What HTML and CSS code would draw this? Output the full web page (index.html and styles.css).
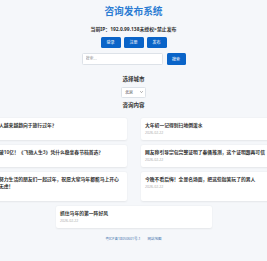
FILE: index.html
```html
<!DOCTYPE html>
<html lang="zh-CN">
<head>
  <meta charset="UTF-8">
  <meta name="viewport" content="width=device-width, initial-scale=1.0">
  <title>咨询发布系统</title>
  <link rel="stylesheet" href="styles.css">
</head>
<body>
  <div class="page">
    <h1 class="site-title">咨询发布系统</h1>
    <p class="ip-status">当前IP：192.0.99.138未授权&gt;禁止发布</p>

    <div class="actions">
      <button class="btn">登录</button>
      <button class="btn">注册</button>
      <button class="btn">发布</button>
    </div>

    <form class="search" onsubmit="return false;">
      <input type="text" class="search-input" placeholder="搜索...">
      <button class="btn search-btn">搜索</button>
    </form>

    <h2 class="section-title">选择城市</h2>
    <div class="city-select">
      <select>
        <option>北京</option>
        <option>上海</option>
        <option>广州</option>
        <option>深圳</option>
      </select>
      <svg class="select-arrow" viewBox="0 0 10 6" fill="none" stroke="currentColor">
        <path stroke-width="1.6" stroke-linecap="round" stroke-linejoin="round" d="M1 1l4 4 4-4" />
      </svg>
    </div>

    <h2 class="section-title">咨询内容</h2>
    <div class="post-list">
      <div class="post-card">
        <h3 class="post-title">为什么年轻人越来越趋向于旅行过年？</h3>
        <div class="post-date">2026-02-22</div>
      </div>
      <div class="post-card">
        <h3 class="post-title">大年初一记得别扫地倒泼水</h3>
        <div class="post-date">2026-02-22</div>
      </div>
      <div class="post-card">
        <h3 class="post-title">春节档票房破10亿！《飞驰人生3》凭什么稳坐春节档首选？</h3>
        <div class="post-date">2026-02-22</div>
      </div>
      <div class="post-card">
        <h3 class="post-title">网友称引导宗包完整证明了秦俑推测，这个证明跟再可信</h3>
        <div class="post-date">2026-02-22</div>
      </div>
      <div class="post-card">
        <h3 class="post-title">致所有正在努力生活的朋友们一起过年，祝愿大家马年都能马上开心快乐，无忧无虑！</h3>
        <div class="post-date">2026-02-22</div>
      </div>
      <div class="post-card">
        <h3 class="post-title">今晚不看后悔！全是名场面，把这些搞笑玩了的男人</h3>
        <div class="post-date">2026-02-22</div>
      </div>
      <div class="post-card">
        <h3 class="post-title">抓住马年的第一阵好风</h3>
        <div class="post-date">2026-02-22</div>
      </div>
    </div>

    <footer class="footer">
      <a href="#">粤ICP备18050601号-1</a>
      <a href="#">网站地图</a>
    </footer>
  </div>
</body>
</html>
```

FILE: styles.css
```css
* {
  margin: 0;
  padding: 0;
  box-sizing: border-box;
}

html,
body {
  overflow-x: hidden;
}

body {
  font-family: "Noto Sans", "Noto Sans CJK SC", sans-serif;
  background-color: #f5f7fa;
  color: #333;
}

.page {
  display: flex;
  flex-direction: column;
  align-items: center;
  padding-top: 6px;
}

.site-title {
  font-size: 9.7px;
  line-height: 12px;
  font-weight: 700;
  color: #2b7cd3;
}

.ip-status {
  margin-top: 7.5px;
  font-size: 4.9px;
  line-height: 7px;
  font-weight: 700;
}

.actions {
  display: flex;
  gap: 3px;
  margin-top: 4.5px;
}

.btn {
  background: #0a64c8;
  color: white;
  border: none;
  border-radius: 1.5px;
  font-family: inherit;
  font-size: 4px;
  line-height: 5px;
  padding: 3px 6px;
  cursor: pointer;
}

.search {
  display: flex;
  gap: 4px;
  margin-top: 5px;
}

.search-input {
  width: 81px;
  height: 11.5px;
  border: 0.5px solid #dde2e8;
  border-radius: 1.5px;
  background: white;
  padding: 0 3px;
  font-family: inherit;
  font-size: 4px;
  color: #333;
  outline: none;
}

.search-input::placeholder {
  color: #999;
}

.search-btn {
  width: 19px;
  height: 12px;
  padding: 0;
}

.section-title {
  margin-top: 10.5px;
  font-size: 5.5px;
  line-height: 7px;
  font-weight: 700;
  color: #333;
}

.city-select {
  position: relative;
  display: flex;
  margin-top: 4px;
}

.city-select select {
  appearance: none;
  width: 25px;
  height: 11px;
  border: 0.5px solid #dde2e8;
  border-radius: 1.5px;
  background: white;
  padding: 0 3px;
  font-family: inherit;
  font-size: 4px;
  color: #333;
}

.select-arrow {
  position: absolute;
  right: 3px;
  top: 4.5px;
  width: 3px;
  height: 2px;
  color: #555;
  pointer-events: none;
}

.city-select + .section-title {
  margin-top: 4px;
}

.post-list {
  width: 326px;
  display: flex;
  flex-wrap: wrap;
  justify-content: center;
  column-gap: 14px;
  row-gap: 5px;
  margin-top: 9.3px;
}

.post-card {
  width: 156px;
  background: white;
  border-radius: 2px;
  box-shadow: 0 0.5px 2px rgba(0, 0, 0, 0.07);
  padding: 4.5px;
}

.post-title {
  font-size: 4.8px;
  line-height: 7px;
  font-weight: 600;
  color: #333;
}

.post-date {
  margin-top: 1px;
  font-size: 3.5px;
  line-height: 5px;
  color: #aaa;
}

.footer {
  display: flex;
  gap: 7px;
  margin-top: 8px;
  font-size: 3.5px;
  line-height: 5px;
}

.footer a {
  color: #4a78b0;
  text-decoration: none;
}
```
